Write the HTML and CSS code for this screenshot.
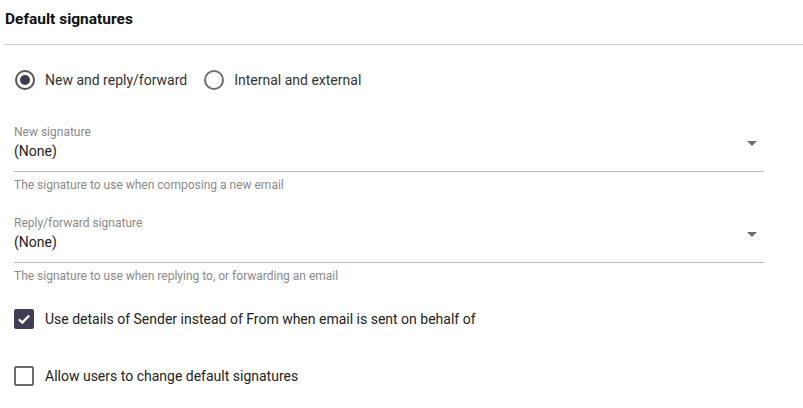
FILE: index.html
```html
<!DOCTYPE html>
<html>
<head>
<meta charset="utf-8">
<link rel="stylesheet" href="styles.css">
</head>
<body>
<div class="page">
  <h2 class="title">Default signatures</h2>
  <div class="divider"></div>
  <div class="radios">
    <label class="radio checked"><span class="circle"><span class="dot"></span></span>New and reply/forward</label>
    <label class="radio"><span class="circle"></span>Internal and external</label>
  </div>
  <div class="field first">
    <div class="select">
      <div class="select-text">
        <div class="flabel">New signature</div>
        <div class="fvalue">(None)</div>
      </div>
      <span class="arrow"></span>
    </div>
    <div class="hint">The signature to use when composing a new email</div>
  </div>
  <div class="field second">
    <div class="select">
      <div class="select-text">
        <div class="flabel">Reply/forward signature</div>
        <div class="fvalue">(None)</div>
      </div>
      <span class="arrow"></span>
    </div>
    <div class="hint">The signature to use when replying to, or forwarding an email</div>
  </div>
  <label class="check checked first-check">
    <span class="box"><svg width="16" height="16" viewBox="0 0 16 16"><path d="M2.8 8.3 L6.3 11.6 L13.2 4.4" fill="none" stroke="#fff" stroke-width="2.2"/></svg></span>
    Use details of Sender instead of From when email is sent on behalf of
  </label>
  <label class="check second-check">
    <span class="box"></span>
    Allow users to change default signatures
  </label>
</div>
</body>
</html>
```
FILE: styles.css
```css
html, body {
  margin: 0;
  padding: 0;
  background: #fff;
}
body {
  font-family: Roboto, "Liberation Sans", Arial, sans-serif;
  color: #222;
}
.page {
  width: 803px;
  height: 408px;
  overflow: hidden;
}
.title {
  margin: 0;
  padding: 10px 0 0 5px;
  font-size: 15.5px;
  font-weight: 700;
  line-height: 18px;
  color: #111;
  height: 25px;
}
.divider {
  margin: 9px 0 0 4px;
  height: 1px;
  background: #cfcfcf;
}
.radios {
  display: flex;
  padding: 25px 0 0 15px;
  gap: 17px;
}
.radio {
  display: flex;
  align-items: center;
  font-size: 14px;
  color: #333;
  line-height: 20px;
}
.circle {
  width: 16px;
  height: 16px;
  border: 2px solid #6e6e6e;
  border-radius: 50%;
  margin-right: 10px;
  display: flex;
  align-items: center;
  justify-content: center;
}
.radio.checked .circle {
  border-color: #555;
}
.dot {
  width: 10px;
  height: 10px;
  border-radius: 50%;
  background: #3d3b52;
}
.field {
  margin-left: 14px;
  width: 750px;
}
.field.first {
  margin-top: 35px;
}
.field.second {
  margin-top: 24px;
}
.select {
  display: flex;
  align-items: center;
  border-bottom: 1px solid #bdbdbd;
  height: 47px;
  box-sizing: border-box;
  padding-bottom: 8px;
}
.select-text {
  flex: 1;
  align-self: flex-start;
}
.flabel {
  font-size: 12px;
  color: #8a8a8a;
  line-height: 14px;
}
.fvalue {
  font-size: 14px;
  color: #222;
  line-height: 20px;
  margin-top: 2px;
}
.arrow {
  width: 0;
  height: 0;
  border-left: 5px solid transparent;
  border-right: 5px solid transparent;
  border-top: 5px solid #707070;
  margin-right: 7px;
  margin-bottom: 2px;
}
.hint {
  font-size: 12px;
  color: #8a8a8a;
  line-height: 14px;
  margin-top: 6px;
}
.check {
  display: flex;
  align-items: center;
  margin-left: 14px;
  font-size: 14px;
  color: #222;
  line-height: 20px;
}
.first-check {
  margin-top: 26px;
}
.second-check {
  margin-top: 37px;
}
.box {
  width: 16px;
  height: 16px;
  border: 2px solid #6e6e6e;
  border-radius: 2px;
  margin-right: 11px;
  display: flex;
  align-items: center;
  justify-content: center;
}
.check.checked .box {
  background: #3f3d56;
  border-color: #3f3d56;
}
```
